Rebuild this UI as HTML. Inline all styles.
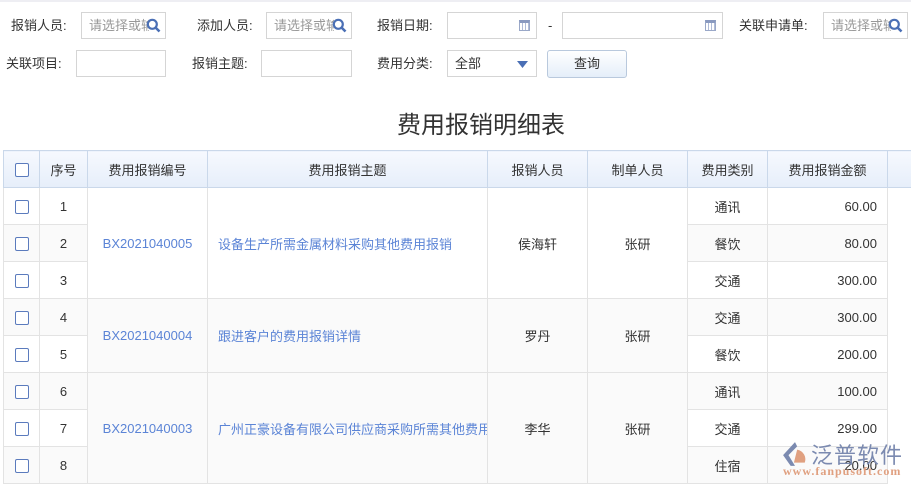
<!DOCTYPE html>
<html><head><meta charset="utf-8"><style>
*{margin:0;padding:0;box-sizing:border-box}
body{width:911px;height:487px;overflow:hidden;background:#fff;font-family:"Liberation Sans","Noto Sans CJK SC",sans-serif;font-size:13px;color:#333;position:relative}
.top{position:absolute;left:0;top:0;width:911px;height:2px;background:#eeeef3}
.lb{position:absolute;font-size:13px;color:#333;line-height:27px}
.in{position:absolute;height:27px;border:1px solid #d5d5d5;background:#fff;font-size:13px;color:#999;line-height:25px;padding-left:7px;overflow:hidden;white-space:nowrap}
.ph{display:inline-block;width:60px;overflow:hidden;vertical-align:top}
.q{position:absolute;right:4px;top:5px}
.cal{position:absolute;right:6px;top:7px;width:11px;height:11px;border:1px solid #9aa8c8;border-top:3px solid #8a9ac0;background:repeating-linear-gradient(90deg,#fff 0 2px,#b0bcd8 2px 3px)}
.btn{position:absolute;left:547px;top:50px;width:80px;height:28px;border:1px solid #b9c9dd;border-radius:3px;background:linear-gradient(#fff,#e5eef9);text-align:center;line-height:26px;color:#333}
h1{position:absolute;left:0;width:962px;top:105px;text-align:center;font-size:24px;font-weight:normal;color:#333}
table{position:absolute;left:3px;top:150px;border-collapse:collapse;table-layout:fixed;width:920px}
td,th{border:1px solid #e3e3e3;height:37px;text-align:center;font-weight:normal;font-size:13px;color:#333;white-space:nowrap;overflow:hidden}
th{background:linear-gradient(#f6f9fe,#e6eefa);border-color:#cad8ea;height:37px}
.cb{display:inline-block;width:14px;height:14px;border:1px solid #5b7bbd;border-radius:2px;vertical-align:middle;background:#fff}
.lk{color:#5b84d6}
.l{text-align:left;padding-left:10px}
.r{text-align:right;padding-right:10px}
.g{background:#fafafa}
.logo{position:absolute;left:781px;top:440px}
</style></head><body>
<div class="top"></div>
<div class="lb" style="left:11px;top:12px">报销人员:</div>
<div class="in" style="left:81px;top:12px;width:85px"><span class="ph">请选择或输</span><svg class="q" width="15" height="15" viewBox="0 0 15 15"><circle cx="6.3" cy="6.3" r="4.5" fill="none" stroke="#4a6fb5" stroke-width="2.2"/><path d="M9.5 9.5L13.5 13.5" stroke="#4a6fb5" stroke-width="2.6"/></svg></div>
<div class="lb" style="left:197px;top:12px">添加人员:</div>
<div class="in" style="left:266px;top:12px;width:86px"><span class="ph">请选择或输</span><svg class="q" width="15" height="15" viewBox="0 0 15 15"><circle cx="6.3" cy="6.3" r="4.5" fill="none" stroke="#4a6fb5" stroke-width="2.2"/><path d="M9.5 9.5L13.5 13.5" stroke="#4a6fb5" stroke-width="2.6"/></svg></div>
<div class="lb" style="left:377px;top:12px">报销日期:</div>
<div class="in" style="left:447px;top:12px;width:90px"><span class="cal"></span></div>
<div class="lb" style="left:548px;top:12px">-</div>
<div class="in" style="left:562px;top:12px;width:161px"><span class="cal"></span></div>
<div class="lb" style="left:739px;top:12px">关联申请单:</div>
<div class="in" style="left:823px;top:12px;width:85px"><span class="ph">请选择或输</span><svg class="q" width="15" height="15" viewBox="0 0 15 15"><circle cx="6.3" cy="6.3" r="4.5" fill="none" stroke="#4a6fb5" stroke-width="2.2"/><path d="M9.5 9.5L13.5 13.5" stroke="#4a6fb5" stroke-width="2.6"/></svg></div>
<div class="lb" style="left:6px;top:50px">关联项目:</div>
<div class="in" style="left:76px;top:50px;width:90px"></div>
<div class="lb" style="left:192px;top:50px">报销主题:</div>
<div class="in" style="left:261px;top:50px;width:91px"></div>
<div class="lb" style="left:377px;top:50px">费用分类:</div>
<div class="in" style="left:447px;top:50px;width:90px;color:#333">全部<svg style="position:absolute;right:8px;top:10px" width="11" height="7"><path d="M0 0H11L5.5 7Z" fill="#4a6fb5"/></svg></div>
<div class="btn">查询</div>
<h1>费用报销明细表</h1>
<table>
<colgroup><col style="width:36px"><col style="width:48px"><col style="width:120px"><col style="width:280px"><col style="width:100px"><col style="width:100px"><col style="width:80px"><col style="width:120px"><col style="width:36px"></colgroup>
<tr><th><span class="cb"></span></th><th>序号</th><th>费用报销编号</th><th>费用报销主题</th><th>报销人员</th><th>制单人员</th><th>费用类别</th><th>费用报销金额</th><th></th></tr>
<tr><td><span class="cb"></span></td><td>1</td><td rowspan="3" class="lk">BX2021040005</td><td rowspan="3" class="lk l">设备生产所需金属材料采购其他费用报销</td><td rowspan="3">侯海轩</td><td rowspan="3">张研</td><td>通讯</td><td class="r">60.00</td><td style="border:none"></td></tr>
<tr class="g"><td><span class="cb"></span></td><td>2</td><td>餐饮</td><td class="r">80.00</td><td style="border:none;background:#fff"></td></tr>
<tr><td><span class="cb"></span></td><td>3</td><td>交通</td><td class="r">300.00</td><td style="border:none"></td></tr>
<tr class="g"><td><span class="cb"></span></td><td>4</td><td rowspan="2" class="lk">BX2021040004</td><td rowspan="2" class="lk l">跟进客户的费用报销详情</td><td rowspan="2">罗丹</td><td rowspan="2">张研</td><td>交通</td><td class="r">300.00</td><td style="border:none;background:#fff"></td></tr>
<tr><td><span class="cb"></span></td><td>5</td><td>餐饮</td><td class="r">200.00</td><td style="border:none"></td></tr>
<tr class="g"><td><span class="cb"></span></td><td>6</td><td rowspan="3" class="lk">BX2021040003</td><td rowspan="3" class="lk l">广州正豪设备有限公司供应商采购所需其他费用</td><td rowspan="3">李华</td><td rowspan="3">张研</td><td>通讯</td><td class="r">100.00</td><td style="border:none;background:#fff"></td></tr>
<tr><td><span class="cb"></span></td><td>7</td><td>交通</td><td class="r">299.00</td><td style="border:none"></td></tr>
<tr class="g"><td><span class="cb"></span></td><td>8</td><td>住宿</td><td class="r">20.00</td><td style="border:none;background:#fff"></td></tr>
</table>
<div class="logo">
<svg width="26" height="26" viewBox="0 0 24 24" style="position:absolute;left:1px;top:1px"><path d="M12 1L1 13L8 23H12L6 13L14 5Z" fill="#7b8ab0"/><path d="M14 8A9 9 0 0 1 21 20L11 20Z" fill="#e0a080"/></svg>
<div style="position:absolute;left:30px;top:-2px;font-size:22px;color:#7b8ab0;white-space:nowrap;letter-spacing:1px">泛普软件</div>
<div style="position:absolute;left:2px;top:24px;font-size:12px;font-family:'Liberation Serif',serif;color:#e0a080;white-space:nowrap;font-weight:bold;letter-spacing:1px">www.fanpusoft.com</div>
</div>
</body></html>
